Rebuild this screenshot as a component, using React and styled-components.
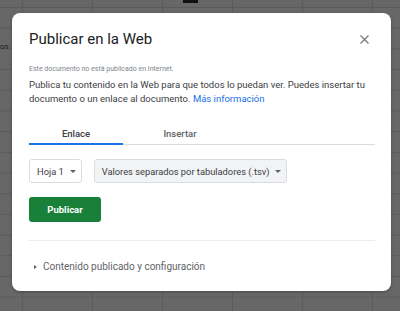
import React from 'react';
import styled, { createGlobalStyle } from 'styled-components';

const colors = {
  sheet: '#676767',
  grid: '#5b5b5b',
  text: '#3c4043',
  muted: '#5f6368',
  faint: '#80868b',
  blue: '#1a73e8',
  line: '#dadce0',
  green: '#188038',
};

const GlobalStyle = createGlobalStyle`
  html, body {
    margin: 0;
    padding: 0;
    background: ${colors.sheet};
    font-family: Roboto, "Liberation Sans", Arial, sans-serif;
  }
`;

const Sheet = styled.div`
  position: relative;
  width: 400px;
  height: 311px;
  overflow: hidden;
  background-color: ${colors.sheet};
  background-image:
    linear-gradient(to right, ${colors.grid} 1px, transparent 1px),
    linear-gradient(to bottom, ${colors.grid} 1px, transparent 1px);
  background-size: 70px 20.7px;
  background-position: 22px 7px;
`;

const CellText = styled.span`
  position: absolute;
  left: 0;
  top: 42px;
  font-size: 8px;
  color: #1e1e1e;
`;

const Tooltip = styled.span`
  position: absolute;
  left: 183px;
  top: 0;
  width: 15px;
  height: 3px;
  background: #111;
`;

const Dialog = styled.div`
  position: absolute;
  left: 12px;
  top: 13px;
  width: 379px;
  height: 278px;
  box-sizing: border-box;
  padding: 15px 16px 0 17px;
  background: #fff;
  border-radius: 8px;
  box-shadow: 0 1px 3px rgba(0, 0, 0, 0.3);
  display: flex;
  flex-direction: column;
`;

const Header = styled.div`
  display: flex;
  align-items: center;
  justify-content: space-between;
  height: 22px;
`;

const Title = styled.h1`
  margin: 0;
  font-size: 15px;
  font-weight: 400;
  color: #202124;
  line-height: 22px;
`;

const CloseButton = styled.button`
  display: flex;
  align-items: center;
  justify-content: center;
  padding: 0;
  margin-right: 6px;
  border: none;
  background: none;
  width: 10px;
  height: 10px;
`;

const Status = styled.p`
  margin: 14px 0 0;
  font-size: 7px;
  line-height: 10px;
  color: ${colors.faint};
`;

const Description = styled.p`
  margin: 4px 0 0;
  font-size: 9.5px;
  line-height: 14px;
  color: ${colors.text};
`;

const Link = styled.a`
  color: ${colors.blue};
  text-decoration: none;
`;

const Tabs = styled.div`
  display: flex;
  margin-top: 17px;
  border-bottom: 1px solid ${colors.line};
`;

const Tab = styled.div`
  width: ${({ width }) => width}px;
  height: 22px;
  box-sizing: border-box;
  display: flex;
  align-items: center;
  justify-content: center;
  font-size: 9.5px;
  font-weight: 500;
  color: ${({ active }) => (active ? colors.text : colors.muted)};
  border-bottom: 2px solid ${({ active }) => (active ? colors.blue : 'transparent')};
  margin-bottom: -1px;
`;

const Selects = styled.div`
  display: flex;
  gap: 12px;
  margin-top: 14px;
`;

const Select = styled.div`
  height: 24px;
  box-sizing: border-box;
  display: flex;
  align-items: center;
  gap: 6px;
  padding: 0 5px 0 7px;
  border: 1px solid ${colors.line};
  border-radius: 3px;
  background: ${({ filled }) => (filled ? '#f1f3f4' : '#fff')};
  font-size: 9.3px;
  color: ${colors.text};
`;

const Caret = styled.span`
  width: 0;
  height: 0;
  border-left: 3px solid transparent;
  border-right: 3px solid transparent;
  border-top: 3px solid ${colors.muted};
`;

const PublishButton = styled.button`
  align-self: flex-start;
  margin-top: 14px;
  width: 72px;
  height: 25px;
  border: none;
  border-radius: 3px;
  background: ${colors.green};
  color: #fff;
  font-family: inherit;
  font-size: 9.5px;
  font-weight: 700;
`;

const Divider = styled.hr`
  margin: 18px 0 0;
  border: none;
  border-top: 1px solid #ececec;
`;

const Expander = styled.div`
  display: flex;
  align-items: center;
  gap: 6px;
  margin-top: 20px;
  padding-left: 5px;
  font-size: 10px;
  color: ${colors.muted};
`;

const Arrow = styled.span`
  width: 0;
  height: 0;
  border-top: 2.5px solid transparent;
  border-bottom: 2.5px solid transparent;
  border-left: 3px solid ${colors.muted};
`;

function CloseIcon() {
  return (
    <svg width="9" height="9" viewBox="0 0 9 9">
      <path d="M0.5 0.5 L8.5 8.5 M8.5 0.5 L0.5 8.5" stroke="#70757a" strokeWidth="1.1" fill="none" />
    </svg>
  );
}

export default function App() {
  return (
    <>
      <GlobalStyle />
      <Sheet>
        <CellText>os</CellText>
        <Tooltip />
        <Dialog>
          <Header>
            <Title>Publicar en la Web</Title>
            <CloseButton aria-label="Cerrar">
              <CloseIcon />
            </CloseButton>
          </Header>
          <Status>Este documento no está publicado en Internet.</Status>
          <Description>
            Publica tu contenido en la Web para que todos lo puedan ver. Puedes insertar tu
            documento o un enlace al documento. <Link href="#">Más información</Link>
          </Description>
          <Tabs>
            <Tab active width={94}>Enlace</Tab>
            <Tab width={114}>Insertar</Tab>
          </Tabs>
          <Selects>
            <Select>
              Hoja 1 <Caret />
            </Select>
            <Select filled>
              Valores separados por tabuladores (.tsv) <Caret />
            </Select>
          </Selects>
          <PublishButton>Publicar</PublishButton>
          <Divider />
          <Expander>
            <Arrow />
            Contenido publicado y configuración
          </Expander>
        </Dialog>
      </Sheet>
    </>
  );
}
